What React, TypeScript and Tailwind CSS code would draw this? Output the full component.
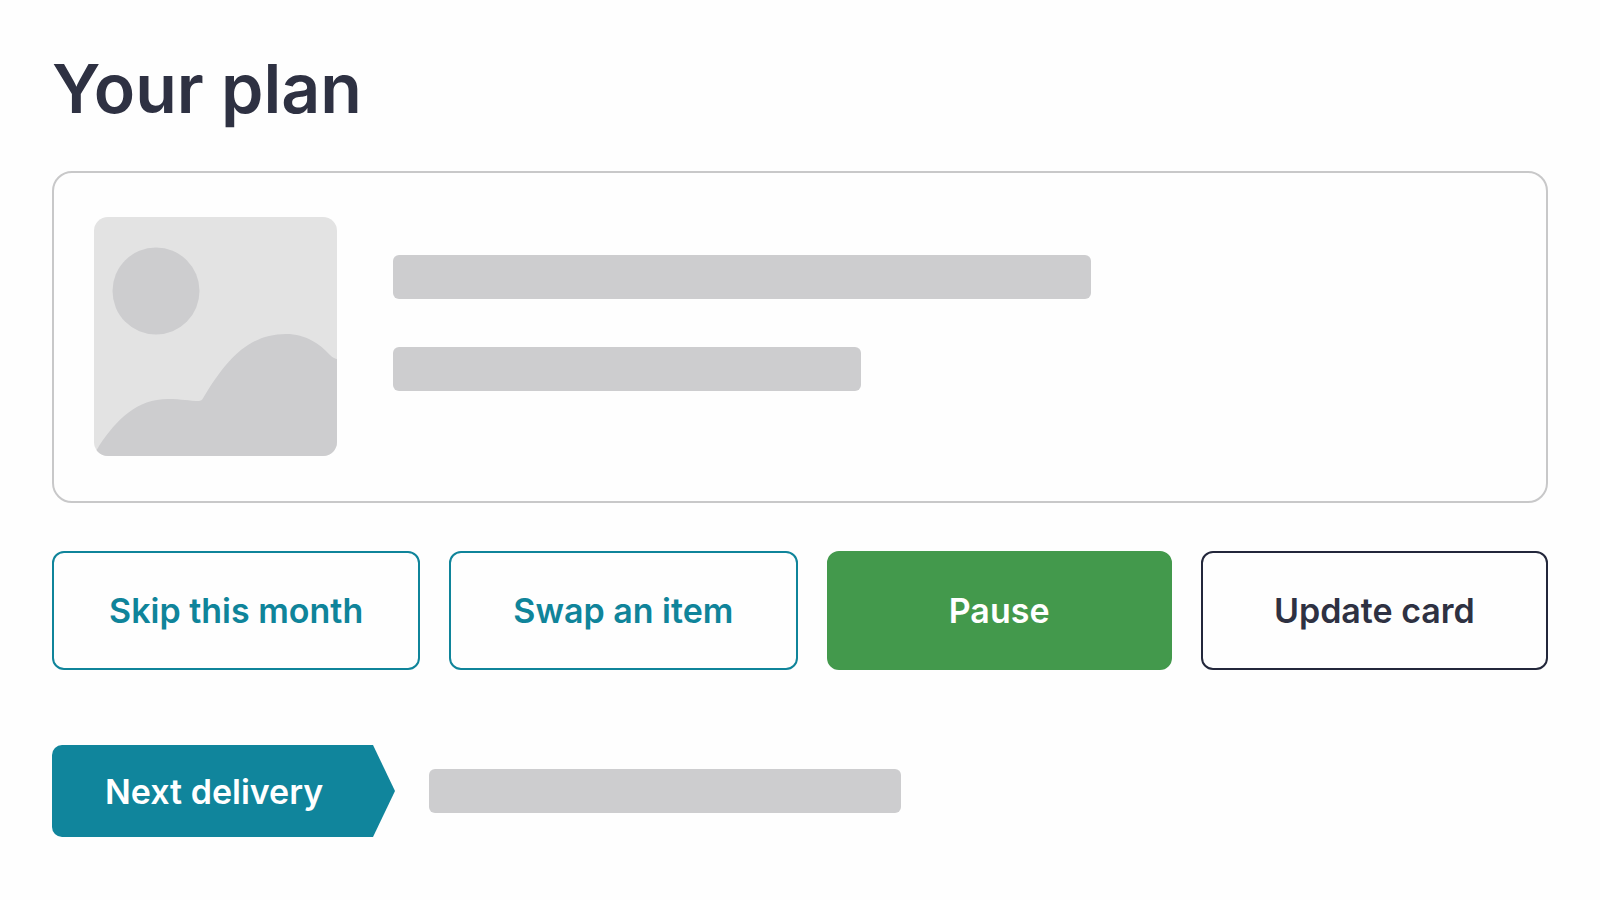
import clsx from "clsx";

const actions = [
  { label: "Skip this month", className: "border-[#0f849a] text-[#0f849a]" },
  { label: "Swap an item", className: "border-[#0f849a] text-[#0f849a]" },
  { label: "Pause", className: "border-[#43994c] bg-[#43994c] text-white" },
  { label: "Update card", className: "border-[#23273b] text-[#2e3142]" },
];

function Bar({ className }: { className?: string }) {
  return <div className={clsx("h-11 rounded-md bg-[#cdcdcf]", className)} />;
}

function Thumbnail() {
  return (
    <svg
      viewBox="0 0 243 239"
      className="h-[239px] w-[243px] shrink-0 rounded-[14px] bg-[#e3e3e3]"
      aria-hidden="true"
    >
      <g fill="#cdcdcf">
        <circle cx="62" cy="74" r="43.5" />
        <path d="M0 236C2 234 4 231 5 229C23 202 43 182 74 182C88 182 95 184 105 184C108 184 109 181 111 178C132 144 154 117 192 117C212 117 226 127 236 138C239 141 240 141 243 142V239H0Z" />
      </g>
    </svg>
  );
}

export default function App() {
  return (
    <main className="min-h-screen bg-[#fefefe] px-[52px] pt-[42px] pb-[62px] font-['Inter',sans-serif]">
      <h1 className="text-[68px] leading-[92px] font-semibold text-[#2e3142]">Your plan</h1>

      <section className="mt-[37px] flex gap-14 rounded-[20px] border-2 border-[#c8c8c9] pt-11 pb-[45px] pl-10">
        <Thumbnail />
        <div className="flex flex-1 flex-col gap-12 pt-[38px]">
          <Bar className="w-[698px]" />
          <Bar className="w-[468px]" />
        </div>
      </section>

      <div className="mt-12 grid grid-cols-[368fr_348fr_345fr_347fr] gap-[29px]">
        {actions.map(({ label, className }) => (
          <button
            key={label}
            type="button"
            className={clsx("h-[119px] rounded-xl border-2 text-[34px] font-semibold", className)}
          >
            {label}
          </button>
        ))}
      </div>

      <div className="mt-[75px] flex items-center gap-[34px]">
        <div className="flex h-[92px] w-[343px] items-center rounded-l-[10px] bg-[#10859c] pl-[53px] text-[34px] font-semibold text-white [clip-path:polygon(0_0,calc(100%-22px)_0,100%_50%,calc(100%-22px)_100%,0_100%)]">
          Next delivery
        </div>
        <Bar className="w-[472px]" />
      </div>
    </main>
  );
}
